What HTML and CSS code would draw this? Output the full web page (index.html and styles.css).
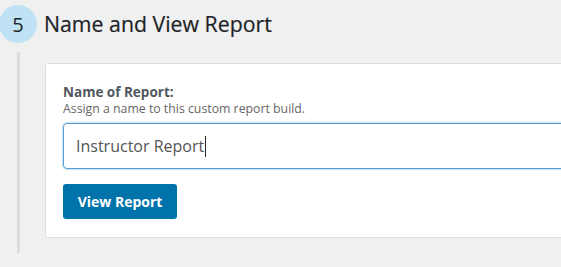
FILE: index.html
```html
<!DOCTYPE html>
<html>
<head>
<meta charset="utf-8">
<link rel="stylesheet" href="styles.css">
</head>
<body>
<div class="step">
  <div class="step-header">
    <div class="step-num">5</div>
    <h2 class="step-title">Name and View Report</h2>
  </div>
  <div class="step-body">
    <div class="card">
      <div class="field-label">Name of Report:</div>
      <div class="field-help">Assign a name to this custom report build.</div>
      <div class="text-input">Instructor Report<span class="caret"></span></div>
      <button class="btn-primary">View Report</button>
    </div>
  </div>
</div>
</body>
</html>
```
FILE: styles.css
```css
html, body {
  margin: 0;
  padding: 0;
  background: #f0f0f0;
  overflow: hidden;
  font-family: "Open Sans", "Noto Sans", sans-serif;
}
.step {
  width: 620px;
}
.step-header {
  display: flex;
  align-items: center;
  padding-top: 5px;
}
.step-num {
  width: 38px;
  height: 38px;
  margin-left: -1px;
  border-radius: 50%;
  background: #bfe3f5;
  color: #1d2327;
  font-size: 20px;
  display: flex;
  align-items: center;
  justify-content: center;
}
.step-title {
  margin: 0 0 0 7px;
  font-size: 21.3px;
  font-weight: 400;
  color: #1d2327;
  line-height: 30px;
  -webkit-text-stroke: 0.2px #1d2327;
}
.step-body {
  margin-top: 9px;
  margin-left: 17px;
  border-left: 3px solid #dcdcdc;
  padding: 11px 0 15px 25px;
}
.card {
  background: #fff;
  border: 1px solid #dcdcdc;
  border-radius: 3px;
  padding: 20px 17px 18px 17px;
}
.field-label {
  font-size: 13.5px;
  font-weight: 700;
  color: #50575e;
  line-height: 17px;
}
.field-help {
  font-size: 12.3px;
  color: #666;
  line-height: 15px;
}
.text-input {
  margin-top: 7px;
  height: 44px;
  border: 1px solid #5b9dd9;
  border-radius: 4px;
  box-shadow: 0 0 2px rgba(30, 140, 190, 0.8);
  padding: 0 12px;
  display: flex;
  align-items: center;
  font-size: 16px;
  color: #555;
}
.caret {
  display: inline-block;
  width: 1px;
  height: 21px;
  background: #222;
  margin-left: 1px;
}
.btn-primary {
  margin-top: 15px;
  width: 114px;
  height: 35px;
  border: none;
  border-radius: 3px;
  background: #0073aa;
  color: #fff;
  font-family: "Open Sans", "Noto Sans", sans-serif;
  font-size: 14px;
  font-weight: 700;
  padding: 0;
  display: block;
}
```
